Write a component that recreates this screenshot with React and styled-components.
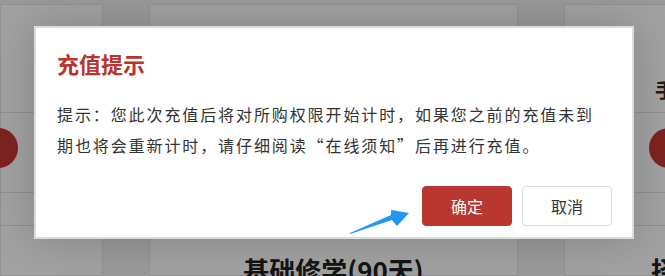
import React from 'react';
import styled, { createGlobalStyle } from 'styled-components';

const GlobalStyle = createGlobalStyle`
    html, body {
        margin: 0;
        padding: 0;
        width: 665px;
        height: 276px;
        overflow: hidden;
        background: #f2f2f2;
        font-family: "Noto Sans CJK SC", "Noto Sans", sans-serif;
    }
`;

const Page = styled.div`
    position: relative;
    width: 665px;
    height: 276px;
    overflow: hidden;
`;

const Carousel = styled.div`
    display: flex;
    gap: 46px;
    padding-top: 4px;
    height: 100%;
    box-sizing: border-box;
`;

const Card = styled.div`
    flex: 0 0 ${p => p.width}px;
    background: #fff;
    border: 1px solid #e6e6e6;
    box-sizing: border-box;
    display: flex;
    flex-direction: column;
    align-items: ${p => p.align || 'stretch'};
`;

const Row = styled.div`
    height: ${p => p.h}px;
    border-bottom: 1px solid #e3e3e3;
    box-sizing: border-box;
    font-size: 20px;
    font-weight: bold;
    color: #3a2a1a;
    padding: ${p => p.pad || '0'};
`;

const CardTitle = styled.div`
    margin-top: auto;
    padding-left: ${p => p.indent || 0}px;
    font-size: 26px;
    font-weight: bold;
    color: #222;
    line-height: 1;
    transform: translateY(8px);
    white-space: nowrap;
`;

const NavButton = styled.div`
    position: absolute;
    top: 128px;
    ${p => (p.side === 'left' ? 'left: -22px;' : 'right: -24px;')}
    width: 40px;
    height: 40px;
    border-radius: 50%;
    background: #c73832;
`;

const Mask = styled.div`
    position: absolute;
    inset: 0;
    background: rgba(0, 0, 0, 0.37);
    padding: 26px 0 0 34px;
    box-sizing: border-box;
`;

const Dialog = styled.div`
    width: 600px;
    height: 213px;
    background: #fff;
    border: 2px solid #dcdcdc;
    box-sizing: border-box;
    box-shadow: 0 0 40px rgba(0, 0, 0, 0.18);
    padding: 20px 20px 0 21px;
    display: flex;
    flex-direction: column;
`;

const Title = styled.h3`
    margin: 0;
    font-size: 22px;
    line-height: 30px;
    font-weight: bold;
    color: #b8342c;
`;

const Content = styled.p`
    margin: 21px 10px 0 0;
    font-size: 16px;
    line-height: 31px;
    letter-spacing: 1.9px;
    color: #333;
`;

const Footer = styled.div`
    display: flex;
    justify-content: flex-end;
    gap: 10px;
    margin-top: auto;
    padding-bottom: 11px;
`;

const Button = styled.button`
    width: 90px;
    height: 40px;
    border-radius: 4px;
    font-family: inherit;
    font-size: 16px;
    cursor: pointer;
    background: ${p => (p.primary ? '#b8382f' : '#fff')};
    color: ${p => (p.primary ? '#fff' : '#333')};
    border: 1px solid ${p => (p.primary ? '#b8382f' : '#dcdcdc')};
`;

const Pointer = styled.svg`
    position: absolute;
    left: 340px;
    top: 200px;
`;

const App = () => (
    <Page>
        <GlobalStyle />
        <Carousel>
            <Card width={103}>
                <Row h={108} />
                <Row h={80} />
                <Row h={33} />
            </Card>
            <Card width={369} align="center">
                <CardTitle>基础修学(90天)</CardTitle>
            </Card>
            <Card width={300}>
                <Row h={108} pad="70px 0 0 90px">手</Row>
                <Row h={80} />
                <Row h={33} />
                <CardTitle indent={86}>择</CardTitle>
            </Card>
        </Carousel>
        <NavButton side="left" />
        <NavButton side="right" />
        <Mask>
            <Dialog>
                <Title>充值提示</Title>
                <Content>
                    提示：您此次充值后将对所购权限开始计时，如果您之前的充值未到期也将会重新计时，请仔细阅读“在线须知”后再进行充值。
                </Content>
                <Footer>
                    <Button primary>确定</Button>
                    <Button>取消</Button>
                </Footer>
            </Dialog>
        </Mask>
        <Pointer width="80" height="40" viewBox="0 0 80 40">
            <polygon points="10,34 52,20 57,26 69,13 51,10 51,15 10,33" fill="#2196f3" />
        </Pointer>
    </Page>
);

export default App;
